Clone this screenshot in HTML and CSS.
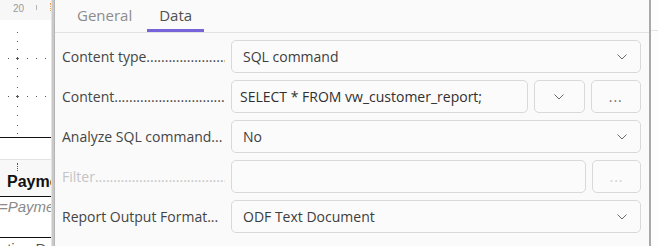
FILE: index.html
```html
<!DOCTYPE html>
<html lang="en">
<head>
<meta charset="UTF-8" />
<title>Report properties - Data</title>
<link rel="stylesheet" href="styles.css">
</head>
<body>
  <div class="window">
    <!-- report canvas (left) -->
    <div class="canvas">
      <div class="ruler">
        <span class="ruler-num">20</span>
        <span class="ruler-tick"></span>
        <span class="ruler-mark"></span>
      </div>
      <div class="grid">
        <svg width="51" height="117" viewBox="0 0 51 117">
          <g fill="#555">
            <rect x="17" y="12" width="1" height="1"/><rect x="17" y="21" width="1" height="1"/>
            <rect x="17" y="29" width="1" height="1"/><rect x="17" y="48" width="1" height="1"/>
            <rect x="17" y="56" width="1" height="1"/><rect x="17" y="67" width="1" height="1"/>
            <rect x="17" y="86" width="1" height="1"/><rect x="17" y="95" width="1" height="1"/>
            <rect x="17" y="105" width="1" height="1"/><rect x="17" y="113" width="1" height="1"/>
            <rect x="16" y="38" width="3" height="1"/><rect x="17" y="37" width="1" height="3"/>
            <rect x="16" y="76" width="3" height="1"/><rect x="17" y="75" width="1" height="3"/>
            <rect x="8" y="38" width="1" height="1"/><rect x="27" y="38" width="1" height="1"/>
            <rect x="36" y="38" width="1" height="1"/><rect x="45" y="38" width="1" height="1"/>
            <rect x="8" y="76" width="1" height="1"/><rect x="27" y="76" width="1" height="1"/>
            <rect x="36" y="76" width="1" height="1"/><rect x="45" y="76" width="1" height="1"/>
          </g>
        </svg>
      </div>
      <div class="band"></div>
      <div class="section">
        <div class="section-dots"></div>
        <div class="field-head">Payment</div>
      </div>
      <div class="field-row">=PaymentDate</div>
      <div class="field-next">Application Date</div>
    </div>

    <div class="splitter"></div>

    <!-- properties panel -->
    <div class="panel">
      <div class="tabs">
        <span class="tab">General</span>
        <span class="tab active">Data</span>
      </div>

      <div class="rows">
        <div class="row">
          <label class="lbl"><span>Content type</span><span class="dots">....................................................</span></label>
          <div class="combo">
            <span>SQL command</span>
            <svg class="chev" width="10" height="6" viewBox="0 0 10 6"><path d="M0.5 0.5 L5 5 L9.5 0.5" fill="none" stroke="#6a6a6a" stroke-width="1"/></svg>
          </div>
        </div>

        <div class="row">
          <label class="lbl"><span>Content</span><span class="dots">....................................................</span></label>
          <div class="entry">SELECT * FROM vw_customer_report;</div>
          <div class="btn">
            <svg width="10" height="6" viewBox="0 0 10 6"><path d="M0.5 0.5 L5 5 L9.5 0.5" fill="none" stroke="#6a6a6a" stroke-width="1"/></svg>
          </div>
          <div class="btn">...</div>
        </div>

        <div class="row">
          <label class="lbl"><span>Analyze SQL command...</span></label>
          <div class="combo">
            <span>No</span>
            <svg class="chev" width="10" height="6" viewBox="0 0 10 6"><path d="M0.5 0.5 L5 5 L9.5 0.5" fill="none" stroke="#6a6a6a" stroke-width="1"/></svg>
          </div>
        </div>

        <div class="row disabled">
          <label class="lbl"><span>Filter</span><span class="dots">....................................................</span></label>
          <div class="entry wide"></div>
          <div class="btn">...</div>
        </div>

        <div class="row">
          <label class="lbl"><span>Report Output Format...</span></label>
          <div class="combo">
            <span>ODF Text Document</span>
            <svg class="chev" width="10" height="6" viewBox="0 0 10 6"><path d="M0.5 0.5 L5 5 L9.5 0.5" fill="none" stroke="#6a6a6a" stroke-width="1"/></svg>
          </div>
        </div>
      </div>
    </div>

    <div class="edge">
      <div class="edge-top"></div>
    </div>
  </div>
</body>
</html>
```

FILE: styles.css
```css
:root {
  --panel: #fafafa;
  --border: #d9d9d9;
  --texto: #3d3d3d;
  --roxo: #7764d8;
}
body {
  margin: 0;
  padding: 0;
  font-family: "Open Sans", "Noto Sans", sans-serif;
  background: #fff;
}
.window {
  display: flex;
  width: 658px;
  height: 246px;
  overflow: hidden;
}

/* canvas */
.canvas {
  width: 51px;
  flex: none;
  display: flex;
  flex-direction: column;
  background: #fff;
  overflow: hidden;
  font-family: "Liberation Sans", Arial, sans-serif;
}
.ruler {
  height: 20px;
  background: #f7f7f7;
  position: relative;
  flex: none;
}
.ruler-num {
  position: absolute;
  left: 13px;
  top: 3px;
  font-size: 10px;
  color: #9a9a9a;
}
.ruler-tick {
  position: absolute;
  left: 36px;
  top: 5px;
  width: 1px;
  height: 5px;
  background: #b5b5b5;
}
.ruler-mark {
  position: absolute;
  left: 50px;
  top: 3px;
  width: 1px;
  height: 8px;
  border-left: 1px dotted #e8a25a;
}
.grid {
  height: 117px;
  flex: none;
}
.grid svg {
  display: block;
}
.band {
  height: 23px;
  border-top: 1px solid #111;
  border-bottom: 1px solid #e3e3e3;
  flex: none;
  box-sizing: border-box;
}
.section {
  height: 37px;
  background: #f8f8f8;
  position: relative;
  flex: none;
  border-bottom: 1px solid #111;
  box-sizing: border-box;
}
.section-dots {
  position: absolute;
  left: 17px;
  top: 3px;
  width: 1px;
  height: 8px;
  border-left: 1px dotted #555;
}
.field-head {
  position: absolute;
  left: 7px;
  top: 13px;
  font-size: 16px;
  font-weight: bold;
  color: #111;
  white-space: nowrap;
}
.field-row {
  height: 41px;
  font-size: 15px;
  font-style: italic;
  color: #8a8a8a;
  white-space: nowrap;
  padding-top: 1px;
  box-sizing: border-box;
  border-bottom: 1px solid #111;
  flex: none;
  margin-left: -1px;
}
.field-next {
  font-size: 15px;
  color: #555;
  white-space: nowrap;
  margin-left: -42px;
  margin-top: 2px;
}

.splitter {
  width: 4px;
  flex: none;
  background: #c9c9c9;
  border-left: 1px solid #e2e2e2;
  box-sizing: border-box;
  border-right: 1px solid #b5b5b5;
}

/* panel */
.panel {
  width: 594px;
  flex: none;
  background: var(--panel);
  color: var(--texto);
}
.tabs {
  height: 33px;
  display: flex;
  padding-left: 10px;
  border-bottom: 1px solid #e2e2e2;
  box-sizing: border-box;
}
.tab {
  padding: 5px 12px 0;
  font-size: 15px;
  color: #8c8c8c;
  border-bottom: 3px solid transparent;
  margin-right: 3px;
}
.tab.active {
  color: #505050;
  border-bottom-color: var(--roxo);
}
.rows {
  display: flex;
  flex-direction: column;
  gap: 7px;
  padding: 7px 8px 0 7px;
}
.row {
  display: flex;
  align-items: center;
  gap: 6px;
  height: 33px;
}
.lbl {
  width: 163px;
  flex: none;
  white-space: nowrap;
  overflow: hidden;
  font-size: 14px;
  color: #454545;
}
.row.disabled .lbl {
  color: #c4c4c4;
}
.combo, .entry, .btn {
  height: 33px;
  box-sizing: border-box;
  border: 1px solid var(--border);
  border-radius: 5px;
  background: #fbfbfb;
  font-size: 14px;
  display: flex;
  align-items: center;
}
.combo {
  flex: 1;
  justify-content: space-between;
  padding: 0 13px 0 11px;
}
.entry {
  width: 297px;
  padding: 0 8px;
  color: #303030;
  white-space: nowrap;
}
.entry.wide {
  width: 355px;
}
.btn {
  flex: 1;
  justify-content: center;
  color: #707070;
  letter-spacing: 1px;
}
.row.disabled .btn {
  color: #cfcfcf;
}

.edge {
  flex: 1;
  border-left: 2px solid #a9a9a9;
  background: #fdfdfd;
}
.edge-top {
  height: 30px;
  border-bottom: 1px solid #e3e3e3;
}
```
